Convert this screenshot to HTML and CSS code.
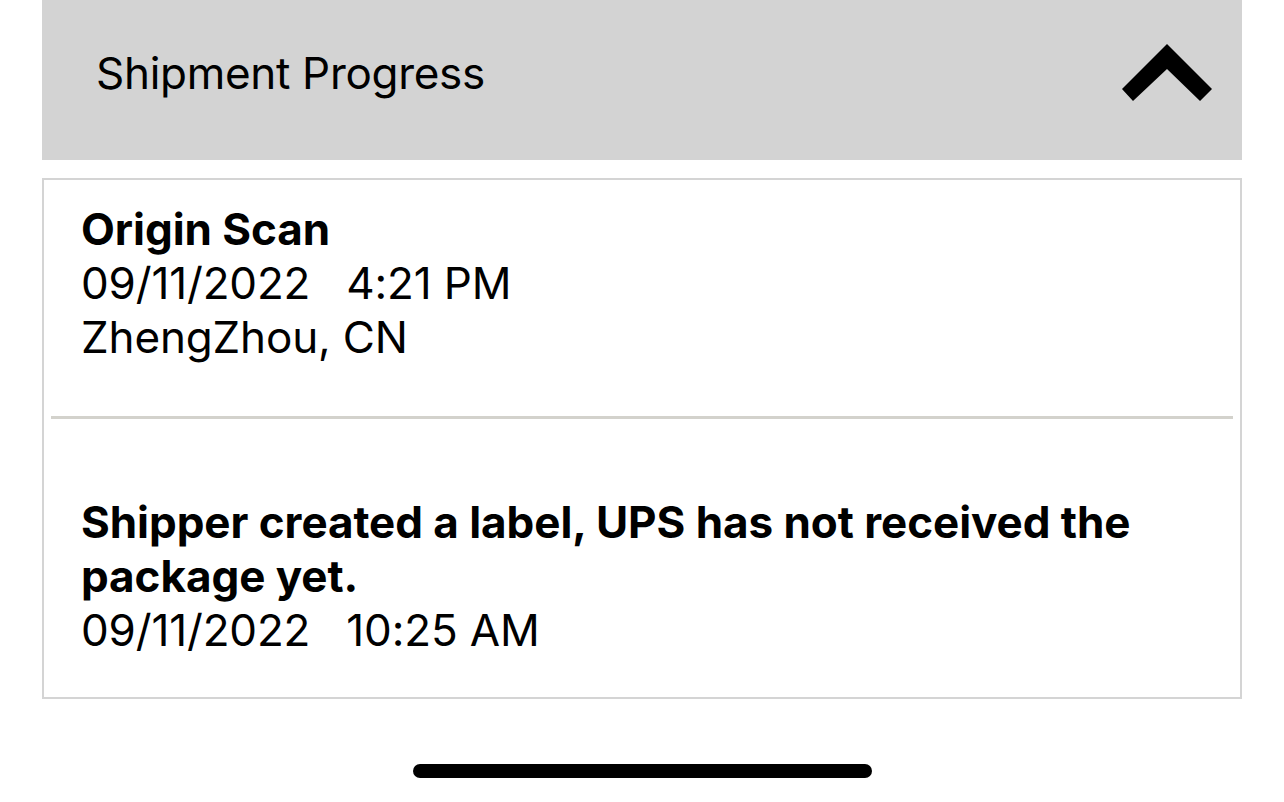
FILE: index.html
```html
<!DOCTYPE html>
<html lang="en">
<head>
<meta charset="utf-8">
<title>Shipment Progress</title>
<link rel="stylesheet" href="styles.css">
</head>
<body>
<div class="page">
  <div class="header">
    <h1 class="header-title">Shipment Progress</h1>
    <svg class="chevron" viewBox="0 0 90 57" width="90" height="57" aria-hidden="true">
      <polygon points="0,45 45,0 90,45 78,57 45,25 11,57" fill="#000"/>
    </svg>
  </div>
  <div class="card">
    <div class="event event-first">
      <div class="event-title">Origin Scan</div>
      <div class="event-line"><span class="date">09/11/2022</span><span class="time">4:21 PM</span></div>
      <div class="event-line">ZhengZhou, CN</div>
    </div>
    <div class="divider"></div>
    <div class="event event-second">
      <div class="event-title">Shipper created a label, UPS has not received the package yet.</div>
      <div class="event-line"><span class="date">09/11/2022</span><span class="time">10:25 AM</span></div>
    </div>
  </div>
  <div class="home-indicator"></div>
</div>
</body>
</html>
```

FILE: styles.css
```css
html, body {
  margin: 0;
  padding: 0;
  background: #ffffff;
}

body {
  font-family: Inter, "Liberation Sans", sans-serif;
  color: #000;
  width: 1284px;
  height: 802px;
  overflow: hidden;
}

.page {
  padding: 0 42px;
  display: flex;
  flex-direction: column;
}

.header {
  height: 160px;
  box-sizing: border-box;
  background: #d3d3d3;
  display: flex;
  justify-content: space-between;
  align-items: flex-start;
  padding: 44px 30px 0 54px;
}

.header-title {
  margin: 2px 0 0 0;
  font-size: 44px;
  line-height: 54px;
  font-weight: 400;
  letter-spacing: -0.3px;
}

.chevron {
  display: block;
}

.card {
  margin-top: 18px;
  border: 2px solid #d4d4d4;
  background: #fff;
}

.event {
  padding-left: 37px;
  font-size: 44px;
  line-height: 54px;
}

.event-first {
  padding-top: 22px;
  padding-bottom: 52px;
}

.event-second {
  padding-top: 76px;
  padding-bottom: 40px;
}

.event-title {
  font-weight: 700;
  letter-spacing: -0.05px;
}

.event-line {
  font-weight: 400;
  letter-spacing: -0.15px;
}

.date {
  margin-right: 36px;
}

.divider {
  height: 3px;
  margin: 0 7px;
  background: #d3d2cc;
}

.home-indicator {
  align-self: center;
  width: 459px;
  height: 14px;
  border-radius: 7px;
  background: #000;
  margin-top: 65px;
}
```
